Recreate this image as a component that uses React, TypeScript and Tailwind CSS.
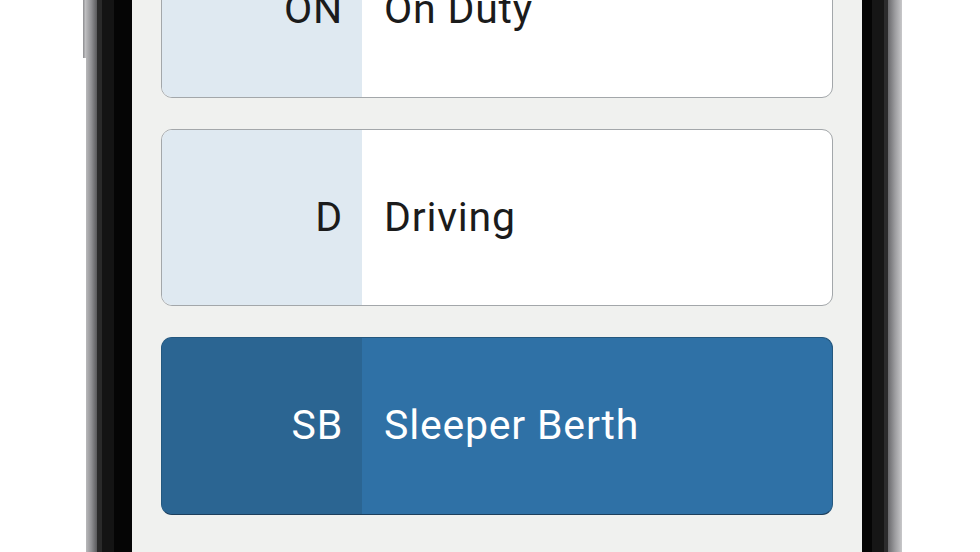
import React from "react";

type Status = {
  code: string;
  label: string;
  active?: boolean;
};

const statuses: Status[] = [
  { code: "ON", label: "On Duty" },
  { code: "D", label: "Driving" },
  { code: "SB", label: "Sleeper Berth", active: true },
];

const StatusCard: React.FC<{ status: Status }> = ({ status }) => {
  if (status.active) {
    return (
      <div className="flex h-[178px] shrink-0 overflow-hidden rounded-[11px] border-[1.5px] border-[#24587f] border-b-[#1d3f5c] bg-[#2f71a6] text-white">
        <div className="flex w-[200px] items-center justify-end bg-[#2b6592] pr-[19px] text-[41px] tracking-[0.8px]">
          {status.code}
        </div>
        <div className="flex flex-1 items-center pl-[22px] text-[41px] tracking-[0.8px]">{status.label}</div>
      </div>
    );
  }
  return (
    <div className="flex h-[177px] shrink-0 overflow-hidden rounded-[11px] border-[1.5px] border-[#a3a7aa] bg-white text-[#1b1b1b]">
      <div className="flex w-[200px] items-center justify-end bg-[#dfe9f1] pr-[19px] text-[41px] tracking-[0.8px]">
        {status.code}
      </div>
      <div className="flex flex-1 items-center pl-[22px] text-[41px] tracking-[0.8px]">{status.label}</div>
    </div>
  );
};

const App: React.FC = () => {
  return (
    <div
      className="flex h-[552px] w-[980px] overflow-hidden bg-white"
      style={{ fontFamily: "Roboto, 'Noto Sans', sans-serif" }}
    >
      <div className="w-[83px] shrink-0" />
      {/* side button */}
      <div className="flex w-[3px] shrink-0 flex-col">
        <div className="h-[58px] bg-gradient-to-r from-[#8d8d90] to-[#c9c9cb]" />
      </div>
      {/* frame edge left */}
      <div className="w-[11px] shrink-0 bg-gradient-to-r from-[#b9b9bb] via-[#8f8f92] to-[#5a5a5c]" />
      {/* bezel left */}
      <div className="flex w-[35px] shrink-0">
        <div className="w-[5px] bg-[#2a2a2a]" />
        <div className="w-[12px] bg-[#141414]" />
        <div className="flex-1 bg-[#050505]" />
      </div>
      {/* screen */}
      <div className="flex w-[730px] shrink-0 flex-col bg-[#f0f1ef] px-[29px]">
        <div className="-mt-[79px] flex flex-col gap-[31px]">
          {statuses.map((s) => (
            <StatusCard key={s.code} status={s} />
          ))}
        </div>
      </div>
      {/* bezel right */}
      <div className="flex w-[26px] shrink-0">
        <div className="w-[10px] bg-[#050505]" />
        <div className="flex-1 bg-[#161616]" />
        <div className="w-[4px] bg-[#2c2c2d]" />
      </div>
      {/* frame edge right */}
      <div className="w-[14px] shrink-0 bg-gradient-to-r from-[#6a6a6d] via-[#9c9c9f] to-[#c8c8ca]" />
      <div className="flex-1" />
    </div>
  );
};

export default App;
